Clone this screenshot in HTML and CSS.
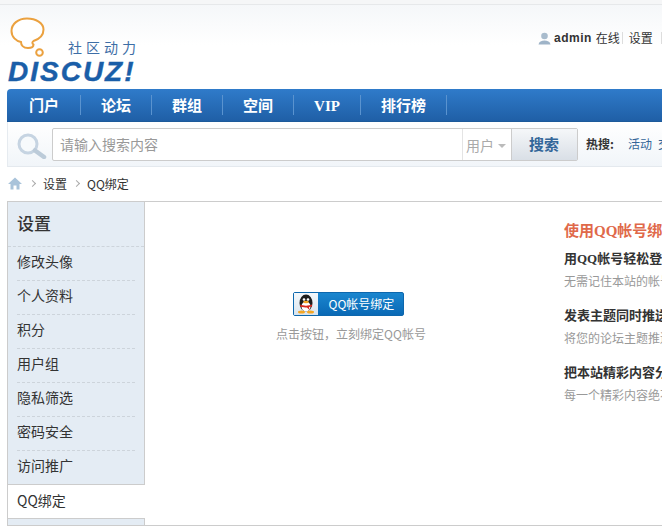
FILE: index.html
```html
<!DOCTYPE html>
<html lang="zh">
<head>
<meta charset="utf-8">
<title>QQ绑定</title>
<link rel="stylesheet" href="styles.css">
</head>
<body>
<div class="page">
  <div class="topstrip"></div>
  <header class="header">
    <div class="logo">
      <div class="logo-top">
        <svg class="bubble" width="38" height="41" viewBox="0 0 38 41">
          <path d="M17 1.500C8 1.500 1.500 7 1.500 14C1.500 20 6 24 11 25C11 28 13 31 18 31C21.500 31 23.500 30 23.500 27.500C22 26.500 22 25 23.500 24C29.500 22 33.500 18 33.500 12.500C33.500 6 26 1.500 17 1.500Z" fill="#fff" stroke="#eba13f" stroke-width="2"/>
          <circle cx="29.500" cy="35.500" r="3.300" fill="#fff" stroke="#eba13f" stroke-width="2"/>
        </svg>
        <span class="slogan">社区动力</span>
      </div>
      <div class="wordmark">DISCUZ!</div>
    </div>
    <div class="user">
      <svg class="user-icon" width="13" height="13" viewBox="0 0 13 13">
        <circle cx="6.500" cy="4" r="3.300" fill="#a9bccd"/>
        <path d="M0.500 12.500C1 9.500 3.500 8.500 6.500 8.500C9.500 8.500 12 9.500 12.500 12.500Z" fill="#9fb4c8"/>
      </svg>
      <b class="user-name">admin</b>
      <span class="user-state">在线</span>
      <span class="user-link">设置</span>
    </div>
  </header>

  <nav class="nav">
    <a class="nav-item nav-first">门户</a>
    <a class="nav-item">论坛</a>
    <a class="nav-item">群组</a>
    <a class="nav-item">空间</a>
    <a class="nav-item nav-latin">VIP</a>
    <a class="nav-item">排行榜</a>
  </nav>

  <div class="search">
    <svg class="search-icon" width="30" height="26" viewBox="0 0 30 26">
      <circle cx="11" cy="11" r="9" fill="#f7fafc" stroke="#c6d4e2" stroke-width="3"/>
      <path d="M18 17.500L27 24" stroke="#bccbd9" stroke-width="4.500" stroke-linecap="round"/>
    </svg>
    <div class="search-box">
      <div class="search-input">请输入搜索内容</div>
      <div class="search-type">用户<i class="caret"></i></div>
      <div class="search-btn">搜索</div>
    </div>
    <div class="hot"><b class="hot-label">热搜:</b><span class="hot-link">活动</span><span class="hot-link">交友</span></div>
  </div>

  <div class="crumbs">
    <svg class="home" width="14" height="13" viewBox="0 0 14 13">
      <path d="M7 0.500L0 7H2.500V12.500H5.500V8.500H8.500V12.500H11.500V7H14Z" fill="#a9c3da"/>
    </svg>
    <i class="chev"></i>
    <span>设置</span>
    <i class="chev"></i>
    <span>QQ绑定</span>
  </div>

  <div class="content">
    <aside class="side">
      <h2 class="side-title">设置</h2>
      <ul class="side-list">
        <li class="side-item side-first">修改头像</li>
        <li class="side-item">个人资料</li>
        <li class="side-item">积分</li>
        <li class="side-item">用户组</li>
        <li class="side-item">隐私筛选</li>
        <li class="side-item">密码安全</li>
        <li class="side-item">访问推广</li>
        <li class="side-active">QQ绑定</li>
      </ul>
    </aside>
    <main class="main">
      <section class="bind">
        <a class="qq-btn">
          <span class="qq-logo">
            <svg width="18" height="20" viewBox="0 0 18 20">
              <ellipse cx="9" cy="9" rx="6.500" ry="8.500" fill="#1d1d1d"/>
              <ellipse cx="9" cy="12.500" rx="4.500" ry="5" fill="#fff"/>
              <circle cx="7" cy="5.500" r="1.300" fill="#fff"/>
              <circle cx="11" cy="5.500" r="1.300" fill="#fff"/>
              <ellipse cx="9" cy="8" rx="2.800" ry="1.200" fill="#f5a623"/>
              <path d="M3 10.500C6 12 12 12 15 10.500L15 12.500L12 13L12.500 16L10 13.500C8 13.500 6 13.300 3.500 12.800Z" fill="#d9271c"/>
              <ellipse cx="4.500" cy="18" rx="3.500" ry="1.500" fill="#f5a623"/>
              <ellipse cx="13.500" cy="18" rx="3.500" ry="1.500" fill="#f5a623"/>
            </svg>
          </span>
          <span class="qq-text">QQ帐号绑定</span>
        </a>
        <p class="bind-hint">点击按钮，立刻绑定QQ帐号</p>
      </section>
      <section class="intro">
        <h3 class="intro-title">使用QQ帐号绑定的好处</h3>
        <div class="intro-group">
          <h4 class="intro-head">用QQ帐号轻松登录本站</h4>
          <p class="intro-desc">无需记住本站的帐号和密码</p>
        </div>
        <div class="intro-group">
          <h4 class="intro-head">发表主题同时推送到QQ空间</h4>
          <p class="intro-desc">将您的论坛主题推送给好友</p>
        </div>
        <div class="intro-group">
          <h4 class="intro-head">把本站精彩内容分享给好友</h4>
          <p class="intro-desc">每一个精彩内容绝不错过</p>
        </div>
      </section>
    </main>
  </div>
</div>
</body>
</html>
```
FILE: styles.css
```css
* { box-sizing: border-box; }
html, body { margin: 0; padding: 0; background: #fff; }
body {
  width: 662px;
  height: 526px;
  overflow: hidden;
  font-family: "Noto Sans CJK SC", "Liberation Sans", sans-serif;
  font-size: 12px;
  color: #333;
}
h2, h3, h4, p, ul { margin: 0; padding: 0; }
ul { list-style: none; }
.page { width: 980px; }

.topstrip { height: 5px; background: #f5f6f7; border-bottom: 1px solid #e6e8ea; }
.header {
  height: 84px;
  padding-left: 8px;
  display: flex;
  background: linear-gradient(#f5f7f9, #fff 40px);
}
.logo { width: 530px; padding-top: 12px; }
.logo-top { display: flex; align-items: flex-end; height: 41px; padding-left: 2px; }
.bubble { display: block; }
.slogan {
  margin-left: 20px;
  margin-bottom: 2px;
  font-size: 14px;
  line-height: 18px;
  letter-spacing: 4px;
  color: #3d6ea6;
  white-space: nowrap;
}
.wordmark {
  margin-top: 1px;
  font-family: "Liberation Sans", sans-serif;
  font-weight: 700;
  font-style: italic;
  font-size: 28px;
  line-height: 25px;
  letter-spacing: 2px;
  color: #1a5ea8;
  -webkit-text-stroke: 0.400px #1a5ea8;
}
.user { display: flex; align-items: center; height: 22px; margin-top: 22px; white-space: nowrap; }
.user-icon { display: block; }
.user-name { margin-left: 3px; font-family: "Liberation Sans", sans-serif; font-size: 12px; letter-spacing: 0.500px; }
.user-state { margin-left: 4px; padding-right: 2px; border-right: 1px solid #ddd; line-height: 12px; }
.user-link { margin-left: 6px; padding-right: 8px; border-right: 1px solid #ddd; line-height: 12px; }

.nav {
  margin-left: 7px;
  height: 33px;
  padding-left: 2px;
  display: flex;
  align-items: center;
  border-radius: 4px 0 0 0;
  background: linear-gradient(#2f7bca, #1f5fa6);
  border-bottom: 1px solid #1d5a9a;
}
.nav-item {
  height: 20px;
  padding: 0 20px;
  border-right: 1px solid #5a93cf;
  font-size: 15px;
  font-weight: 700;
  line-height: 20px;
  color: #fff;
}
.nav-first { padding-right: 21px; }
.nav-latin { font-family: "Liberation Serif", serif; font-size: 15px; line-height: 23px; }

.search {
  margin-left: 7px;
  height: 45px;
  padding-left: 9px;
  display: flex;
  align-items: flex-start;
  background: linear-gradient(#fff, #f1f5f9);
  border-left: 1px solid #e6ebf0;
  border-bottom: 1px solid #e4e9ee;
}
.search-icon { margin-top: 11px; flex: none; display: block; }
.search-box {
  margin-top: 6px;
  margin-left: 5px;
  width: 526px;
  height: 33px;
  display: flex;
  border: 1px solid #ccc;
  border-radius: 2px;
  background: #fff;
}
.search-input { width: 409px; padding-left: 7px; font-size: 14px; line-height: 31px; color: #999; }
.search-type {
  width: 49px;
  padding-left: 3px;
  display: flex;
  align-items: center;
  border-left: 1px solid #e4e4e4;
  font-size: 14px;
  color: #aaa;
}
.caret {
  margin-left: 4px;
  margin-top: 2px;
  border-left: 4px solid transparent;
  border-right: 4px solid transparent;
  border-top: 4px solid #bbb;
}
.search-btn {
  flex: 1;
  padding-left: 17px;
  border-left: 1px solid #ccc;
  background: linear-gradient(#f5f7f9, #d9dfe6);
  font-size: 15px;
  font-weight: 700;
  line-height: 30px;
  color: #336699;
}
.hot { margin-top: 12px; margin-left: 8px; display: flex; white-space: nowrap; line-height: 20px; font-size: 12px; }
.hot-label { width: 42px; font-size: 12px; color: #333; }
.hot-link { margin-right: 6px; color: #369; }

.crumbs {
  margin-left: 8px;
  height: 34px;
  padding-bottom: 2px;
  display: flex;
  align-items: center;
  font-size: 12px;
  color: #333;
}
.home { display: block; margin-right: 1px; }
.chev {
  width: 5px;
  height: 5px;
  margin: 0 8px 0 7px;
  border-top: 1px solid #aaa;
  border-right: 1px solid #aaa;
  transform: rotate(45deg);
}

.content {
  margin-left: 7px;
  height: 325px;
  display: flex;
  border-top: 1px solid #ccc;
  border-left: 1px solid #ccc;
  border-bottom: 1px solid #ccc;
}
.side { width: 137px; flex: none; background: #e4ecf4; border-right: 1px solid #ccc; }
.side-title {
  height: 45px;
  padding-left: 9px;
  font-size: 17px;
  font-weight: 500;
  line-height: 42px;
  color: #333;
  border-bottom: 1px dashed #cdd4db;
}
.side-item {
  height: 34px;
  margin: 0 9px;
  font-size: 14px;
  line-height: 28px;
  color: #333;
  border-top: 1px dashed #cdd4db;
}
.side-first { height: 33px; line-height: 29px; border-top: 0; }
.side-active {
  width: 137px;
  height: 35px;
  padding-left: 9px;
  font-size: 14px;
  background: #fff;
  border-top: 1px solid #ccc;
  border-bottom: 1px solid #ccc;
  line-height: 30px;
}

.main { flex: 1; display: flex; }
.bind { width: 406px; flex: none; padding-top: 90px; display: flex; flex-direction: column; align-items: center; }
.qq-btn {
  width: 111px;
  height: 24px;
  display: flex;
  border: 1px solid #0d67ad;
  border-radius: 2px;
  background: linear-gradient(#1a86cf, #0a69b5);
}
.qq-logo {
  width: 24px;
  display: flex;
  align-items: center;
  justify-content: center;
  background: linear-gradient(#f4f8fb, #d8e4ee);
}
.qq-text { flex: 1; padding-left: 11px; font-size: 12px; line-height: 21px; color: #fff; }
.bind-hint { margin: 10px 0 0 6px; font-size: 12px; line-height: 16px; color: #999; }

.intro { flex: 1; padding: 19px 0 0 13px; white-space: nowrap; }
.intro-title {
  font-family: "Liberation Serif", "Noto Sans CJK SC", serif;
  font-size: 15px;
  font-weight: 700;
  line-height: 20px;
  color: #e0694a;
}
.intro-group { height: 57px; padding-top: 9px; }
.intro-head {
  font-family: "Liberation Serif", "Noto Sans CJK SC", serif;
  font-size: 13px;
  font-weight: 700;
  line-height: 18px;
  color: #333;
}
.intro-desc { margin-top: 4px; font-size: 12px; line-height: 18px; color: #999; }
```
